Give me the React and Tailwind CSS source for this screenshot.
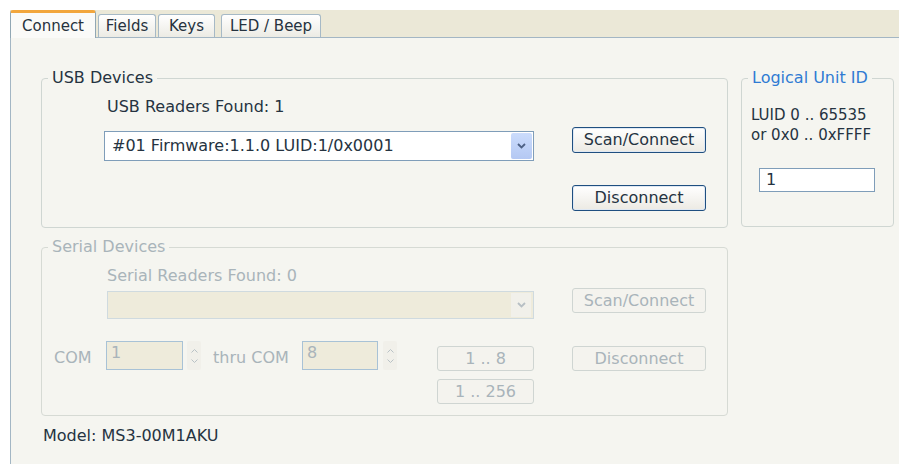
import React from 'react';

const text = 'text-[#253341]';
const dim = 'text-[#a9b4ba]';

function Chevron({ color = '#4d6185' }) {
  return (
    <svg width="9" height="6" viewBox="0 0 9 6">
      <path d="M1 1 L4.5 4.5 L8 1" fill="none" stroke={color} strokeWidth="1.8" />
    </svg>
  );
}

function Tab({ label, active, w }) {
  if (active) {
    return (
      <div
        className={`h-[28px] ${w} -mb-px bg-[#fafaf8] border-x border-[#91a7b4] border-t-[3px] border-t-[#f2a63c] rounded-t-[3px] flex items-center justify-center text-[#26323e] z-10`}
      >
        {label}
      </div>
    );
  }
  return (
    <div
      className={`h-[23px] ${w} bg-gradient-to-b from-white to-[#ecebe4] border border-b-0 border-[#a6b9c6] rounded-t-[3px] flex items-center justify-center text-[#26323e]`}
    >
      {label}
    </div>
  );
}

function Button({ children, disabled, w = 'w-[134px]', h = 'h-[26px]' }) {
  return disabled ? (
    <div className={`${w} ${h} rounded-[3px] border border-[#cfd5d2] bg-[#f4f3ee] flex items-center justify-center ${dim}`}>
      {children}
    </div>
  ) : (
    <div className={`${w} ${h} rounded-[3px] border border-[#1f4f80] bg-gradient-to-b from-white to-[#eceae3] shadow-[inset_0_0_0_1px_#dfe8f3] flex items-center justify-center ${text}`}>
      {children}
    </div>
  );
}

function Spinner() {
  return (
    <div className="w-[14px] h-[29px] flex flex-col items-center justify-center gap-[6px] bg-[#f1f0ea] rounded-[2px]">
      <svg width="7" height="4" viewBox="0 0 7 4"><path d="M0.5 3.5 L3.5 0.5 L6.5 3.5" fill="none" stroke="#b9c2c6" strokeWidth="1" /></svg>
      <svg width="7" height="4" viewBox="0 0 7 4"><path d="M0.5 0.5 L3.5 3.5 L6.5 0.5" fill="none" stroke="#b9c2c6" strokeWidth="1" /></svg>
    </div>
  );
}

export default function App() {
  return (
    <div className="w-[899px] h-[464px] bg-white pt-[10px] overflow-hidden font-['DejaVu_Sans',sans-serif] text-[16px] leading-[18px]">
      {/* tab strip */}
      <div className="ml-[10px] h-[27px] bg-[#ebe8d7] flex items-end gap-[2px] text-[15px]">
        <Tab label="Connect" active w="w-[86px]" />
        <Tab label="Fields" w="w-[58px]" />
        <Tab label="Keys" w="w-[57px]" />
        <div className="w-[2px]" />
        <Tab label="LED / Beep" w="w-[100px]" />
      </div>

      {/* page */}
      <div className="ml-[10px] h-[427px] bg-[#f5f5f0] border-l border-t border-[#a3b6c4] pl-[30px] pt-[31px]">
        <div className="flex gap-[13px] items-start">
          <fieldset className="w-[687px] h-[159px] border border-[#cfd6d2] rounded-[4px]">
            <legend className={`ml-[6px] px-[4px] ${text}`}>USB Devices</legend>
            <div className="flex pl-[62px] pr-[21px]">
              <div className="w-[430px]">
                <div className={`mt-[11px] ml-[3px] ${text}`}>USB Readers Found: 1</div>
                <div className="mt-[15px] h-[30px] border border-[#7f9db9] bg-white flex items-center justify-between pl-[7px] pr-[1px]">
                  <span className={text}>#01 Firmware:1.1.0 LUID:1/0x0001</span>
                  <div className="w-[21px] h-[26px] bg-gradient-to-b from-[#cbdcfc] to-[#b4c8f3] rounded-[2px] flex items-center justify-center">
                    <Chevron />
                  </div>
                </div>
              </div>
              <div className="ml-auto flex flex-col">
                <div className="mt-[40px]"><Button>Scan/Connect</Button></div>
                <div className="mt-[32px]"><Button>Disconnect</Button></div>
              </div>
            </div>
          </fieldset>

          <fieldset className="w-[153px] h-[158px] border border-[#cfd6d2] rounded-[4px]">
            <legend className="ml-[6px] px-[4px] text-[#2f7bd3]">Logical Unit ID</legend>
            <div className="pl-[9px]">
              <div className={`mt-[18px] ${text} text-[15px] leading-[20px]`}>
                <div>LUID 0 .. 65535</div>
                <div>or 0x0 .. 0xFFFF</div>
              </div>
              <div className={`mt-[23px] ml-[8px] w-[116px] h-[24px] border border-[#7f9db9] bg-white pl-[6px] flex items-center ${text}`}>1</div>
            </div>
          </fieldset>
        </div>

        <fieldset className="mt-[10px] w-[687px] h-[178px] border border-[#d6dad4] rounded-[4px]">
          <legend className={`ml-[6px] px-[4px] ${dim}`}>Serial Devices</legend>
          <div className="pl-[12px] pr-[21px]">
            <div className="flex">
              <div className="ml-[53px] w-[427px]">
                <div className={`mt-[11px] ${dim}`}>Serial Readers Found: 0</div>
                <div className="mt-[6px] h-[28px] border border-[#cfdadf] bg-[#eeebdb] flex items-center justify-end pr-[2px]">
                  <div className="w-[20px] h-[24px] bg-[#f1f0ea] flex items-center justify-center">
                    <Chevron color="#b7bfc4" />
                  </div>
                </div>
              </div>
              <div className="ml-auto mt-[32px]">
                <Button disabled h="h-[25px]">Scan/Connect</Button>
              </div>
            </div>

            <div className="flex items-start mt-[22px]">
              <span className={`w-[52px] mt-[8px] ${dim}`}>COM</span>
              <div className={`w-[77px] h-[29px] border border-[#a8c2d6] bg-[#eeebdb] pl-[4px] pt-[2px] ${dim}`}>1</div>
              <div className="ml-[4px]"><Spinner /></div>
              <span className={`ml-[12px] w-[89px] mt-[8px] ${dim}`}>thru COM</span>
              <div className={`w-[76px] h-[29px] border border-[#a8c2d6] bg-[#eeebdb] pl-[4px] pt-[2px] ${dim}`}>8</div>
              <div className="ml-[5px]"><Spinner /></div>
              <div className="ml-[40px] mt-[5px] flex flex-col gap-[8px]">
                <Button disabled w="w-[97px]" h="h-[25px]">1 .. 8</Button>
                <Button disabled w="w-[97px]" h="h-[25px]">1 .. 256</Button>
              </div>
              <div className="ml-auto mt-[5px]">
                <Button disabled h="h-[25px]">Disconnect</Button>
              </div>
            </div>
          </div>
        </fieldset>

        <div className={`mt-[11px] ml-[2px] ${text}`}>Model: MS3-00M1AKU</div>
      </div>
    </div>
  );
}
